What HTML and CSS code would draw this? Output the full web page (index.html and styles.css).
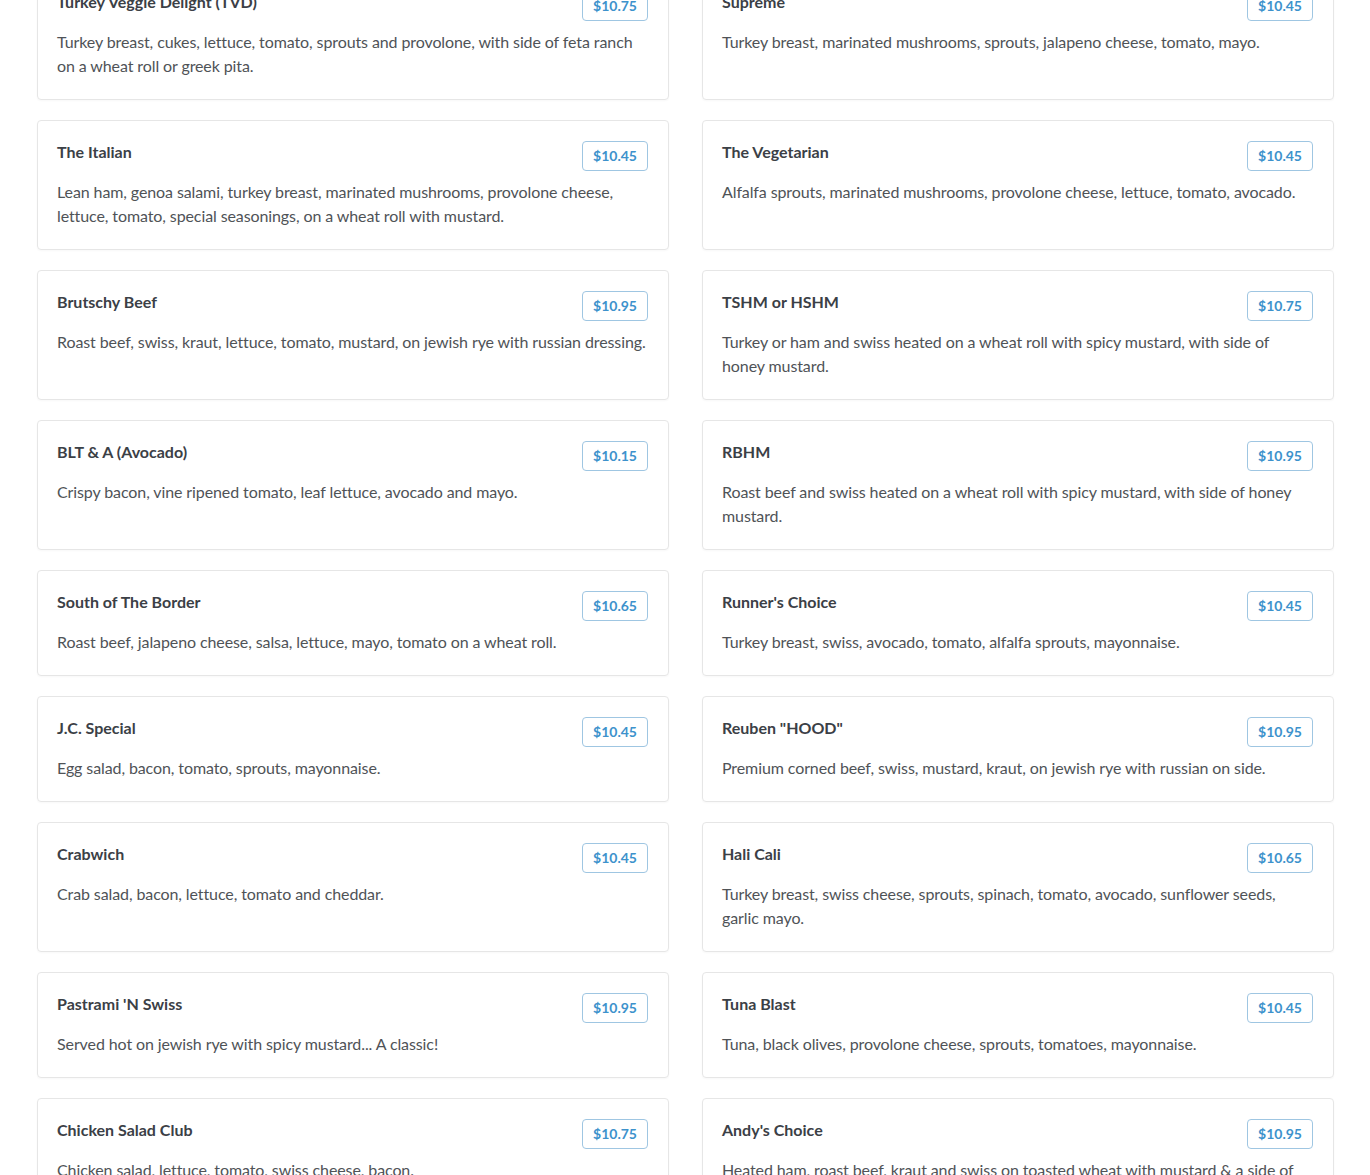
FILE: index.html
```html
<!DOCTYPE html>
<html lang="en">
<head>
    <meta charset="UTF-8">
    <meta name="viewport" content="width=device-width, initial-scale=1.0">
    <title>Sandwiches</title>
    <link rel="stylesheet" href="styles.css">
</head>
<body>
    <div class="menu-grid">
        <div class="menu-item">
            <div class="item-head"><h3 class="item-name">Turkey Veggie Delight (TVD)</h3><span class="price">$10.75</span></div>
            <p class="item-desc">Turkey breast, cukes, lettuce, tomato, sprouts and provolone, with side of feta ranch on a wheat roll or greek pita.</p>
        </div>
        <div class="menu-item">
            <div class="item-head"><h3 class="item-name">Supreme</h3><span class="price">$10.45</span></div>
            <p class="item-desc">Turkey breast, marinated mushrooms, sprouts, jalapeno cheese, tomato, mayo.</p>
        </div>

        <div class="menu-item">
            <div class="item-head"><h3 class="item-name">The Italian</h3><span class="price">$10.45</span></div>
            <p class="item-desc">Lean ham, genoa salami, turkey breast, marinated mushrooms, provolone cheese, lettuce, tomato, special seasonings, on a wheat roll with mustard.</p>
        </div>
        <div class="menu-item">
            <div class="item-head"><h3 class="item-name">The Vegetarian</h3><span class="price">$10.45</span></div>
            <p class="item-desc">Alfalfa sprouts, marinated mushrooms, provolone cheese, lettuce, tomato, avocado.</p>
        </div>

        <div class="menu-item">
            <div class="item-head"><h3 class="item-name">Brutschy Beef</h3><span class="price">$10.95</span></div>
            <p class="item-desc">Roast beef, swiss, kraut, lettuce, tomato, mustard, on jewish rye with russian dressing.</p>
        </div>
        <div class="menu-item">
            <div class="item-head"><h3 class="item-name">TSHM or HSHM</h3><span class="price">$10.75</span></div>
            <p class="item-desc">Turkey or ham and swiss heated on a wheat roll with spicy mustard, with side of honey mustard.</p>
        </div>

        <div class="menu-item">
            <div class="item-head"><h3 class="item-name">BLT &amp; A (Avocado)</h3><span class="price">$10.15</span></div>
            <p class="item-desc">Crispy bacon, vine ripened tomato, leaf lettuce, avocado and mayo.</p>
        </div>
        <div class="menu-item">
            <div class="item-head"><h3 class="item-name">RBHM</h3><span class="price">$10.95</span></div>
            <p class="item-desc">Roast beef and swiss heated on a wheat roll with spicy mustard, with side of honey mustard.</p>
        </div>

        <div class="menu-item">
            <div class="item-head"><h3 class="item-name">South of The Border</h3><span class="price">$10.65</span></div>
            <p class="item-desc">Roast beef, jalapeno cheese, salsa, lettuce, mayo, tomato on a wheat roll.</p>
        </div>
        <div class="menu-item">
            <div class="item-head"><h3 class="item-name">Runner's Choice</h3><span class="price">$10.45</span></div>
            <p class="item-desc">Turkey breast, swiss, avocado, tomato, alfalfa sprouts, mayonnaise.</p>
        </div>

        <div class="menu-item">
            <div class="item-head"><h3 class="item-name">J.C. Special</h3><span class="price">$10.45</span></div>
            <p class="item-desc">Egg salad, bacon, tomato, sprouts, mayonnaise.</p>
        </div>
        <div class="menu-item">
            <div class="item-head"><h3 class="item-name">Reuben "HOOD"</h3><span class="price">$10.95</span></div>
            <p class="item-desc">Premium corned beef, swiss, mustard, kraut, on jewish rye with russian on side.</p>
        </div>

        <div class="menu-item">
            <div class="item-head"><h3 class="item-name">Crabwich</h3><span class="price">$10.45</span></div>
            <p class="item-desc">Crab salad, bacon, lettuce, tomato and cheddar.</p>
        </div>
        <div class="menu-item">
            <div class="item-head"><h3 class="item-name">Hali Cali</h3><span class="price">$10.65</span></div>
            <p class="item-desc">Turkey breast, swiss cheese, sprouts, spinach, tomato, avocado, sunflower seeds, garlic mayo.</p>
        </div>

        <div class="menu-item">
            <div class="item-head"><h3 class="item-name">Pastrami 'N Swiss</h3><span class="price">$10.95</span></div>
            <p class="item-desc">Served hot on jewish rye with spicy mustard... A classic!</p>
        </div>
        <div class="menu-item">
            <div class="item-head"><h3 class="item-name">Tuna Blast</h3><span class="price">$10.45</span></div>
            <p class="item-desc">Tuna, black olives, provolone cheese, sprouts, tomatoes, mayonnaise.</p>
        </div>

        <div class="menu-item">
            <div class="item-head"><h3 class="item-name">Chicken Salad Club</h3><span class="price">$10.75</span></div>
            <p class="item-desc">Chicken salad, lettuce, tomato, swiss cheese, bacon.</p>
        </div>
        <div class="menu-item">
            <div class="item-head"><h3 class="item-name">Andy's Choice</h3><span class="price">$10.95</span></div>
            <p class="item-desc">Heated ham, roast beef, kraut and swiss on toasted wheat with mustard &amp; a side of honey mustard.</p>
        </div>
    </div>
</body>
</html>
```

FILE: styles.css
```css
body {
    margin: 0;
    background-color: #fff;
    font-family: "Lato", "Liberation Sans", sans-serif;
    color: #4a4e53;
}

/* menu grid ======================================================= */

.menu-grid {
    display: grid;
    grid-template-columns: 632px 632px;
    column-gap: 33px;
    row-gap: 20px;
    padding: 0 0 40px 37px;
    margin-top: -30px;
}

.menu-item {
    border: 1px solid #e6e6e6;
    border-radius: 4px;
    padding: 20px 20px 21px 19px;
    box-shadow: 0 1px 2px rgba(0, 0, 0, 0.03);
}

.item-head {
    display: flex;
    justify-content: space-between;
    align-items: flex-start;
    height: 30px;
}

.item-name {
    margin: 0;
    font-size: 16px;
    line-height: 22px;
    font-weight: bold;
    color: #3b4046;
}

.price {
    box-sizing: border-box;
    height: 30px;
    padding: 0 10px;
    border: 1px solid #9fc6e2;
    border-radius: 4px;
    font-size: 14px;
    font-weight: bold;
    line-height: 28px;
    color: #3d92cc;
}

.item-desc {
    margin: 9px 0 0;
    font-size: 16px;
    line-height: 24px;
    letter-spacing: -0.1px;
    color: #4f5357;
}
```
